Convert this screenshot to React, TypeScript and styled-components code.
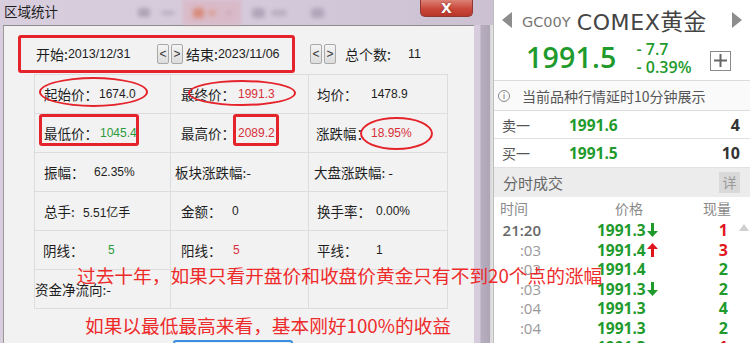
import React from "react";
import styled, { createGlobalStyle } from "styled-components";

const CJK = `"Noto Sans CJK SC", "Noto Sans", sans-serif`;
const NUM = `"Liberation Sans", "Noto Sans CJK SC", sans-serif`;
const OPEN = `"Open Sans", "Noto Sans CJK SC", sans-serif`;
const DEJA = `"DejaVu Sans", "Noto Sans CJK SC", sans-serif`;

const GREEN = "#1f9a2c";
const RED = "#e0161e";

const GlobalStyle = createGlobalStyle`
  html, body { margin: 0; padding: 0; background: #fff; }
  body { width: 750px; height: 343px; overflow: hidden; font-family: ${CJK}; }
`;

const Page = styled.div`
  position: relative;
  width: 750px;
  height: 343px;
  display: flex;
  overflow: hidden;
  background: #fff;
`;

/* ---------------- dialog ---------------- */

const Dialog = styled.div`
  width: 493px;
  flex: none;
  display: flex;
  flex-direction: column;
  background: linear-gradient(90deg, #d9cedd 0%, #d4c9da 55%, #cbc1d3 100%);
`;

const TitleBar = styled.div`
  height: 25px;
  flex: none;
  display: flex;
  align-items: flex-start;
`;

const Title = styled.div`
  font-family: ${CJK};
  font-size: 13.5px;
  line-height: 16px;
  color: #1e1e1e;
  padding: 3px 0 0 4px;
  width: 60px;
  flex: none;
`;

const Toolbar = styled.div`
  display: flex;
  align-items: center;
  height: 25px;
  flex: 1;
  filter: blur(2px);
  opacity: 0.85;
`;

const Blob = styled.div<{ $w: number; $h: number; $c: string; $ml: number }>`
  width: ${(p) => p.$w}px;
  height: ${(p) => p.$h}px;
  margin-left: ${(p) => p.$ml}px;
  background: ${(p) => p.$c};
  border-radius: 3px;
  flex: none;
`;

const HotBox = styled.div`
  margin-left: 8px;
  width: 58px;
  height: 25px;
  background: rgba(222, 168, 178, 0.55);
  display: flex;
  align-items: center;
  flex: none;
`;

const CloseButton = styled.div`
  width: 53px;
  height: 17px;
  margin-right: 20px;
  flex: none;
  box-sizing: border-box;
  border: 1px solid #8e3a32;
  border-top: none;
  border-radius: 0 0 5px 5px;
  background: linear-gradient(180deg, #dc8276 0%, #c9483b 55%, #b8352a 100%);
  color: #fff;
  font-family: "DejaVu Sans", sans-serif;
  font-weight: bold;
  font-size: 14px;
  line-height: 16px;
  text-align: center;
  text-shadow: 0 0 2px #7a1d15;
`;

const DialogBody = styled.div`
  flex: 1;
  display: flex;
  padding-left: 3px;
  min-height: 0;
`;

const Content = styled.div`
  width: 471px;
  box-sizing: border-box;
  flex: none;
  background: #f2f2f2;
  border-top: 1px solid #8c8c8c;
  border-left: 1px solid #9a9a9a;
  padding-top: 9px;
  display: flex;
  flex-direction: column;
  overflow: hidden;
`;

const RightFrame = styled.div`
  flex: 1;
  background: linear-gradient(90deg, #d6ccdc 0%, #d6ccdc 32%, #b7aebf 36%, #aea6b6 82%, #d8d8d8 86%, #e4e4e4 100%);
`;

const RangeRow = styled.div`
  height: 37px;
  flex: none;
  display: flex;
  align-items: center;
  padding-left: 32px;
  color: #1e1e1e;
  white-space: nowrap;
`;

const RangeField = styled.div<{ $w: number }>`
  width: ${(p) => p.$w}px;
  flex: none;
  display: flex;
  align-items: center;
`;

const CjkText = styled.span`
  font-family: ${CJK};
  font-size: 14px;
`;

const NumText = styled.span<{ $color?: string }>`
  font-family: ${NUM};
  font-size: 12.5px;
  color: ${(p) => p.$color || "#1e1e1e"};
`;

const StepGroup = styled.div<{ $mr: number }>`
  display: flex;
  gap: 2px;
  margin-right: ${(p) => p.$mr}px;
  flex: none;
`;

const StepButton = styled.div`
  width: 12px;
  height: 20px;
  box-sizing: border-box;
  border: 1px solid #a9a9a9;
  border-radius: 2px;
  background: linear-gradient(180deg, #f4f4f4, #dcdcdc);
  font-family: ${NUM};
  font-size: 12px;
  line-height: 18px;
  text-align: center;
  color: #333;
`;

const StatsGrid = styled.div`
  flex: none;
  margin: 2px 0 0 30px;
  display: grid;
  grid-template-columns: 136px 138px 139px;
  grid-auto-rows: 39px;
  border-top: 1px solid #dddddd;
  border-left: 1px solid #dddddd;
  width: max-content;
`;

const Cell = styled.div<{ $pad: number }>`
  border-right: 1px solid #dddddd;
  border-bottom: 1px solid #dddddd;
  display: flex;
  align-items: center;
  padding-left: ${(p) => p.$pad}px;
  white-space: nowrap;
  color: #1e1e1e;
  overflow: visible;
`;

const CellLabel = styled.span<{ $w?: number }>`
  font-family: ${CJK};
  font-size: 13.5px;
  flex: none;
  width: ${(p) => (p.$w ? `${p.$w}px` : "auto")};
`;

const CellValue = styled.span<{ $color: string }>`
  font-family: ${NUM};
  font-size: 12px;
  color: ${(p) => p.$color};
`;

const BottomButton = styled.div`
  margin: 31px 0 0 169px;
  width: 120px;
  height: 20px;
  flex: none;
  box-sizing: border-box;
  border: 2px solid #3a8fdc;
  border-radius: 3px;
  background: #e8f1fb;
`;

/* ---------------- quote panel ---------------- */

const Quote = styled.div`
  flex: 1;
  display: flex;
  flex-direction: column;
  background: #fff;
  border-left: 1px solid #bdbdbd;
  font-family: ${CJK};
`;

const QuoteHeader = styled.div`
  height: 80px;
  flex: none;
  border-bottom: 1px solid #dcdcdc;
  display: flex;
  flex-direction: column;
`;

const NameRow = styled.div`
  display: flex;
  align-items: center;
  height: 22px;
  margin-top: 9px;
  padding: 0 8px;
`;

const Code = styled.span`
  font-family: ${DEJA};
  font-size: 14.5px;
  color: #777;
  margin-left: 10px;
  padding-top: 3px;
`;

const Name = styled.span`
  font-family: ${DEJA};
  font-size: 22px;
  color: #444;
  margin-left: 6px;
  letter-spacing: 0.6px;
`;

const NameCjk = styled.span`
  font-family: ${CJK};
  font-size: 23px;
  letter-spacing: 0;
`;

const Spacer = styled.div`
  flex: 1;
`;

const PriceRow = styled.div`
  flex: 1;
  display: flex;
  align-items: center;
  padding: 2px 19px 0 32px;
`;

const BigPrice = styled.span`
  font-family: ${OPEN};
  font-weight: 600;
  font-size: 28.5px;
  color: ${GREEN};
  letter-spacing: 0.2px;
`;

const Change = styled.div`
  margin-left: 20px;
  display: flex;
  flex-direction: column;
  font-family: ${OPEN};
  font-weight: 600;
  font-size: 16px;
  line-height: 18px;
  color: ${GREEN};
  padding-top: 2px;
`;

const PlusBox = styled.div`
  margin-left: auto;
  margin-top: 8px;
  width: 21px;
  height: 20px;
  box-sizing: border-box;
  border: 1px solid #8a8a8a;
  display: flex;
  align-items: center;
  justify-content: center;
`;

const InfoRow = styled.div`
  height: 30px;
  flex: none;
  box-sizing: border-box;
  border-bottom: 1px solid #dcdcdc;
  background: #fafafa;
  display: flex;
  align-items: center;
  padding-left: 4px;
  font-size: 14px;
  color: #555;
`;

const InfoIcon = styled.span`
  width: 12px;
  height: 12px;
  box-sizing: border-box;
  border: 1px solid #888;
  border-radius: 50%;
  font-family: ${DEJA};
  font-size: 9px;
  line-height: 10px;
  text-align: center;
  color: #777;
  margin-right: 12px;
  flex: none;
`;

const OrderRow = styled.div<{ $h: number }>`
  height: ${(p) => p.$h}px;
  flex: none;
  box-sizing: border-box;
  border-bottom: 1px solid #e2e2e2;
  display: flex;
  align-items: center;
  padding: 0 10px 0 8px;
`;

const OrderLabel = styled.span`
  width: 67px;
  font-size: 14px;
  color: #555;
  flex: none;
`;

const OrderPrice = styled.span`
  font-family: ${OPEN};
  font-weight: 700;
  font-size: 15.5px;
  color: ${GREEN};
`;

const OrderQty = styled.span`
  margin-left: auto;
  font-family: ${OPEN};
  font-weight: 700;
  font-size: 16px;
  color: #333;
`;

const SectionHeader = styled.div`
  height: 29px;
  flex: none;
  background: #ececec;
  display: flex;
  align-items: center;
  padding: 0 10px 0 9px;
  font-size: 15px;
  color: #666;
`;

const DetailBox = styled.span`
  margin-left: auto;
  width: 21px;
  height: 21px;
  background: #d9d9d9;
  color: #9a9a9a;
  font-size: 14px;
  line-height: 21px;
  text-align: center;
`;

const ColHeader = styled.div`
  height: 22px;
  flex: none;
  display: flex;
  align-items: center;
  padding: 0 19px 0 6px;
  font-size: 14px;
  color: #8a8a8a;
`;

const ColPrice = styled.span`
  margin-left: 87px;
`;

const ColQty = styled.span`
  margin-left: auto;
`;

const Trades = styled.div`
  flex: 1;
  display: flex;
  min-height: 0;
`;

const TradeList = styled.div`
  flex: 1;
  padding: 0 10px 0 6px;
`;

const TradeRow = styled.div`
  height: 19.5px;
  display: grid;
  grid-template-columns: 41px 1fr auto;
  align-items: center;
  font-family: ${OPEN};
`;

const TradeTime = styled.span<{ $main: boolean }>`
  text-align: right;
  font-size: 15px;
  font-weight: ${(p) => (p.$main ? 600 : 400)};
  color: ${(p) => (p.$main ? "#666" : "#999")};
`;

const TradePrice = styled.span`
  padding-left: 56px;
  display: flex;
  align-items: center;
  font-weight: 700;
  font-size: 15.5px;
  color: ${GREEN};
`;

const TradeQty = styled.span<{ $color: string }>`
  font-weight: 700;
  font-size: 16px;
  color: ${(p) => p.$color};
`;

const ScrollTrack = styled.div`
  width: 12px;
  flex: none;
  display: flex;
  justify-content: center;
  padding-top: 5px;
`;

/* ---------------- annotations ---------------- */

const Overlay = styled.div`
  position: absolute;
  inset: 0;
  pointer-events: none;
`;

const Mark = styled.div<{ $x: number; $y: number; $w: number; $h: number; $round?: boolean }>`
  position: absolute;
  left: ${(p) => p.$x}px;
  top: ${(p) => p.$y}px;
  width: ${(p) => p.$w}px;
  height: ${(p) => p.$h}px;
  box-sizing: border-box;
  border: ${(p) => (p.$round ? "2.5px" : "3px")} solid #e5232a;
  border-radius: ${(p) => (p.$round ? "50%" : "3px")};
`;

const Caption = styled.div<{ $x: number; $y: number }>`
  position: absolute;
  left: ${(p) => p.$x}px;
  top: ${(p) => p.$y}px;
  font-family: ${CJK};
  font-size: 18.7px;
  line-height: 19px;
  color: #ee2b2b;
  white-space: nowrap;
`;

/* ---------------- icons ---------------- */

const Tri = ({ dir }: { dir: "left" | "right" | "up" }) => {
  if (dir === "up")
    return (
      <svg width="10" height="7" viewBox="0 0 10 7">
        <path d="M5 0 L10 7 L0 7 Z" fill="#cfcfcf" />
      </svg>
    );
  return (
    <svg width="10" height="16" viewBox="0 0 10 16">
      <path d={dir === "left" ? "M10 0 L0 8 L10 16 Z" : "M0 0 L10 8 L0 16 Z"} fill="#8d8d8d" />
    </svg>
  );
};

const Arrow = ({ up }: { up: boolean }) => (
  <svg width="11" height="14" viewBox="0 0 11 14" style={{ marginLeft: 1 }}>
    {up ? (
      <>
        <path d="M5.5 0 L11 6 L0 6 Z" fill={RED} />
        <rect x="4" y="5" width="3" height="9" fill={RED} />
      </>
    ) : (
      <>
        <rect x="4" y="0" width="3" height="9" fill={GREEN} />
        <path d="M5.5 14 L11 8 L0 8 Z" fill={GREEN} />
      </>
    )}
  </svg>
);

const Plus = () => (
  <svg width="13" height="13" viewBox="0 0 13 13">
    <rect x="5.5" y="0" width="2" height="13" fill="#666" />
    <rect x="0" y="5.5" width="13" height="2" fill="#666" />
  </svg>
);

/* ---------------- data ---------------- */

type Stat = { label: string; value?: string; color?: string; w?: number; pad: number };

const stats: Stat[] = [
  { label: "起始价：", value: "1674.0", w: 55, pad: 9 },
  { label: "最终价：", value: "1991.3", color: "#d8303a", w: 57, pad: 10 },
  { label: "均价：", value: "1478.9", w: 54, pad: 8 },
  { label: "最低价：", value: "1045.4", color: "#2a9a3a", w: 56, pad: 9 },
  { label: "最高价：", value: "2089.2", color: "#d8303a", w: 57, pad: 10 },
  { label: "涨跌幅：", value: "18.95%", color: "#d8303a", w: 55, pad: 7 },
  { label: "振幅：", value: "62.35%", w: 50, pad: 9 },
  { label: "板块涨跌幅:-", pad: 4 },
  { label: "大盘涨跌幅: -", pad: 5 },
  { label: "总手:", value: "5.51亿手", w: 39, pad: 9 },
  { label: "金额：", value: "0", w: 51, pad: 10 },
  { label: "换手率：", value: "0.00%", w: 59, pad: 8 },
  { label: "阴线：", value: "5", color: "#2a9a3a", w: 65, pad: 8 },
  { label: "阳线：", value: "5", color: "#d8303a", w: 52, pad: 10 },
  { label: "平线：", value: "1", w: 59, pad: 8 },
  { label: "资金净流向:-", pad: 0 },
  { label: "", pad: 0 },
  { label: "", pad: 0 },
];

type Trade = { time: string; main?: boolean; price: string; arrow?: "up" | "down"; qty: string; qtyColor: string };

const trades: Trade[] = [
  { time: "21:20", main: true, price: "1991.3", arrow: "down", qty: "1", qtyColor: RED },
  { time: ":03", price: "1991.4", arrow: "up", qty: "3", qtyColor: RED },
  { time: ":03", price: "1991.4", qty: "2", qtyColor: GREEN },
  { time: ":03", price: "1991.3", arrow: "down", qty: "2", qtyColor: GREEN },
  { time: ":04", price: "1991.3", qty: "4", qtyColor: GREEN },
  { time: ":04", price: "1991.3", qty: "2", qtyColor: GREEN },
  { time: ":04", price: "1991.3", qty: "1", qtyColor: RED },
];

export default function App() {
  return (
    <>
      <GlobalStyle />
      <Page>
        <Dialog>
          <TitleBar>
            <Title>区域统计</Title>
            <Toolbar>
              <Blob $w={12} $h={9} $c="#a89cb1" $ml={74} />
              <Blob $w={14} $h={4} $c="#b3a8bb" $ml={11} />
              <HotBox>
                <Blob $w={11} $h={10} $c="#d9826c" $ml={10} />
                <Blob $w={8} $h={6} $c="#d99a8e" $ml={4} />
                <Blob $w={6} $h={4} $c="#c9a2ac" $ml={10} />
              </HotBox>
              <Blob $w={13} $h={10} $c="#ab9fb5" $ml={11} />
              <Blob $w={16} $h={6} $c="#b4a9bd" $ml={6} />
              <Blob $w={13} $h={10} $c="#ab9fb5" $ml={24} />
            </Toolbar>
            <CloseButton>X</CloseButton>
          </TitleBar>
          <DialogBody>
            <Content>
              <RangeRow>
                <RangeField $w={121}>
                  <CjkText>开始:</CjkText>
                  <NumText>2013/12/31</NumText>
                </RangeField>
                <StepGroup $mr={3}>
                  <StepButton>&lt;</StepButton>
                  <StepButton>&gt;</StepButton>
                </StepGroup>
                <RangeField $w={124}>
                  <CjkText>结束:</CjkText>
                  <NumText>2023/11/06</NumText>
                </RangeField>
                <StepGroup $mr={9}>
                  <StepButton>&lt;</StepButton>
                  <StepButton>&gt;</StepButton>
                </StepGroup>
                <RangeField $w={63}>
                  <CjkText>总个数:</CjkText>
                </RangeField>
                <NumText>11</NumText>
              </RangeRow>
              <StatsGrid>
                {stats.map((s, i) => (
                  <Cell key={i} $pad={s.pad}>
                    <CellLabel $w={s.w}>{s.label}</CellLabel>
                    {s.value && <CellValue $color={s.color || "#1e1e1e"}>{s.value}</CellValue>}
                  </Cell>
                ))}
              </StatsGrid>
              <BottomButton />
            </Content>
            <RightFrame />
          </DialogBody>
        </Dialog>

        <Quote>
          <QuoteHeader>
            <NameRow>
              <Tri dir="left" />
              <Code>GC00Y</Code>
              <Name>
                COMEX<NameCjk>黄金</NameCjk>
              </Name>
              <Spacer />
              <Tri dir="right" />
            </NameRow>
            <PriceRow>
              <BigPrice>1991.5</BigPrice>
              <Change>
                <span>- 7.7</span>
                <span>- 0.39%</span>
              </Change>
              <PlusBox>
                <Plus />
              </PlusBox>
            </PriceRow>
          </QuoteHeader>
          <InfoRow>
            <InfoIcon>i</InfoIcon>
            当前品种行情延时10分钟展示
          </InfoRow>
          <OrderRow $h={28}>
            <OrderLabel>卖一</OrderLabel>
            <OrderPrice>1991.6</OrderPrice>
            <OrderQty>4</OrderQty>
          </OrderRow>
          <OrderRow $h={29}>
            <OrderLabel>买一</OrderLabel>
            <OrderPrice>1991.5</OrderPrice>
            <OrderQty>10</OrderQty>
          </OrderRow>
          <SectionHeader>
            分时成交
            <DetailBox>详</DetailBox>
          </SectionHeader>
          <ColHeader>
            <span>时间</span>
            <ColPrice>价格</ColPrice>
            <ColQty>现量</ColQty>
          </ColHeader>
          <Trades>
            <TradeList>
              {trades.map((t, i) => (
                <TradeRow key={i}>
                  <TradeTime $main={!!t.main}>{t.time}</TradeTime>
                  <TradePrice>
                    {t.price}
                    {t.arrow && <Arrow up={t.arrow === "up"} />}
                  </TradePrice>
                  <TradeQty $color={t.qtyColor}>{t.qty}</TradeQty>
                </TradeRow>
              ))}
            </TradeList>
            <ScrollTrack>
              <Tri dir="up" />
            </ScrollTrack>
          </Trades>
        </Quote>

        <Overlay>
          <Mark $x={18} $y={35} $w={277} $h={38} />
          <Mark $x={39} $y={77} $w={109} $h={30} $round />
          <Mark $x={188} $y={80} $w={108} $h={26} $round />
          <Mark $x={39} $y={114} $w={100} $h={32} />
          <Mark $x={233} $y={114} $w={46} $h={32} />
          <Mark $x={360} $y={117} $w={73} $h={33} $round />
          <Caption $x={77} $y={265}>过去十年，如果只看开盘价和收盘价黄金只有不到20个点的涨幅</Caption>
          <Caption $x={85} $y={315}>如果以最低最高来看，基本刚好100%的收益</Caption>
        </Overlay>
      </Page>
    </>
  );
}
